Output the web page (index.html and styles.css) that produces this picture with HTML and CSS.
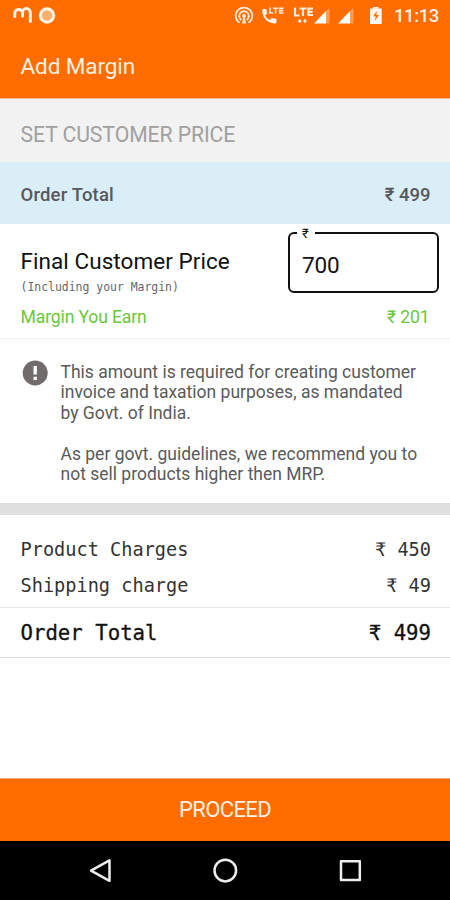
FILE: index.html
```html
<!DOCTYPE html>
<html lang="en">
<head>
<meta charset="utf-8">
<title>Add Margin</title>
<link rel="stylesheet" href="styles.css">
</head>
<body>
<div class="screen">
  <header class="header">
    <div class="status">
      <svg class="status-left" width="45" height="32" viewBox="0 0 45 32" fill="none" stroke="#fff5e8">
        <path d="M1.800 16.500v-3.500a3.900 3.900 0 0 1 7.700-.5v3.500M9.500 12.500a3.900 3.900 0 0 1 7.800 0v9" stroke-width="3" stroke-linecap="round"/>
        <circle cx="34" cy="15.500" r="6.700" fill="#ffb06f" stroke-width="3"/>
      </svg>
      <svg class="status-icons" width="125" height="32" viewBox="234 0 125 32" fill="none" stroke="#ffeadb">
        <path d="M239.500 22.800a8.300 8.300 0 1 1 9 0M241.300 20a4.800 4.800 0 1 1 5.400 0" stroke-width="1.800"/>
        <circle cx="244" cy="16" r="1.900" fill="#ffeadb" stroke="none"/>
        <path d="M243.200 17.500h1.600l1.200 6h-4z" fill="#ffeadb" stroke="none"/>
        <path d="M262.500 9h3.700l1.200 4.500-2.400 2q1.500 3 4.500 4.400l2.200-2.200 4.800 1.200v3.700q-1 1.200-3 .8-10-2-11.300-11.500z" fill="#fff5ec" stroke="none"/>
        <path d="M270 7.500v5.500h3.200M273 8.200h5.200M275.600 8.200v5.500M283.500 8.200h-3.800v4.800h3.800M279.700 10.600h3.500" stroke-width="1.600"/>
        <path d="M295 7.500v8h4.500M299.500 8.500h7M303 8.500v7.500M313 8.500h-4.600v6.500h4.600M308.400 11.800h4.200" stroke-width="2.200"/>
        <path d="M297.500 21l2.500-2.200 1.700 2.200-1.700 2.200zM307 21l-2.200-2.200-1.700 2.200 1.700 2.200z" fill="#ffeadb" stroke="none"/>
        <path d="M314 23.500 326 11v12.500zM338 23.500 350 11v12.500z" fill="#fff" stroke="none"/>
        <path d="M326 11l3.500-3v15.500h-3.500zM350 11l3.500-3v15.500h-3.500z" fill="#ff9b55" stroke="none"/>
      </svg>
      <svg class="battery" width="14" height="32" viewBox="369 0 14 32">
        <path d="M370 8.500h3V7h5.500v1.500h3.200v15.500H370z" fill="#fff5ec"/>
        <path d="M376.800 11l-3.600 5.300h2.500l-.7 4.400 3.900-5.700h-2.600z" fill="#ff6c00"/>
      </svg>
      <span class="clock">11:13</span>
    </div>
    <h1 class="title">Add Margin</h1>
  </header>
  <div class="section-label"><span>SET CUSTOMER PRICE</span></div>
  <div class="total-band"><span class="total-name">Order Total</span><span class="total-sum">₹ 499</span></div>
  <section class="price">
    <div class="price-row">
      <div class="price-names">
        <div class="price-title">Final Customer Price</div>
        <div class="price-note">(Including your Margin)</div>
      </div>
      <div class="price-field"><span class="unit">₹</span><span class="value">700</span></div>
    </div>
    <div class="earn"><span class="earn-name">Margin You Earn</span><span class="earn-sum">₹ 201</span></div>
  </section>
  <section class="info">
    <svg class="info-icon" width="26" height="26" viewBox="0 0 26 26">
      <circle cx="13.200" cy="13" r="12.500" fill="#726b6c"/>
      <path d="M11.500 6h3.400v8.500h-3.400zM11.500 16.700h3.400v3.300h-3.400z" fill="#fff"/>
    </svg>
    <div class="info-text">
      <p>This amount is required for creating customer<br>invoice and taxation purposes, as mandated<br>by Govt. of India.</p>
      <p>As per govt. guidelines, we recommend you to<br>not sell products higher then MRP.</p>
    </div>
  </section>
  <section class="charges">
    <div class="charge"><span>Product Charges</span><span>₹ 450</span></div>
    <div class="charge"><span>Shipping charge</span><span>₹ 49</span></div>
  </section>
  <div class="grand"><span>Order Total</span><span>₹ 499</span></div>
  <button class="proceed"><span>PROCEED</span></button>
  <nav class="nav">
    <svg width="26" height="26" viewBox="0 0 26 26"><path d="M22.500 2.300v20.500L4 12.600z"/></svg>
    <svg width="26" height="26" viewBox="0 0 26 26"><circle cx="13.300" cy="12.600" r="10.800"/></svg>
    <svg width="26" height="26" viewBox="0 0 26 26"><path d="M4 3.300h18.800v18.800H4z"/></svg>
  </nav>
</div>
</body>
</html>
```
FILE: styles.css
```css
* { box-sizing: border-box; }
body { margin: 0; }
.screen {
  width: 450px; height: 900px; display: flex; flex-direction: column;
  background: #fff; color: #111; font-family: Roboto, sans-serif;
}
.header { height: 99px; background: #ff6c00; border-bottom: 1px solid #ffb88a; color: #fff2e6; }
.status { height: 32px; display: flex; padding: 0 12px 0 13px; }
.status svg { flex: none; }
.status-icons { margin-left: 176px; }
.battery { margin-left: 10px; }
.clock { margin-left: 11px; font-size: 18.500px; font-weight: 500; letter-spacing: -.4px; line-height: 33px; white-space: nowrap; }
.title { margin: 0; padding-left: 20.500px; font-size: 22.500px; font-weight: 400; letter-spacing: -.1px; line-height: 68px; }
.section-label { height: 63px; padding-left: 20.500px; background: #f2f2f2; color: #a0a0a0; font-size: 21.200px; letter-spacing: -.08px; line-height: 72px; }
.total-band {
  height: 62px; padding: 0 19.500px 0 20.500px; display: flex; justify-content: space-between;
  background: #daeef7; color: #58585c; font-size: 18.500px; font-weight: 500; line-height: 67px;
}
.total-name { letter-spacing: .18px; }
.price { height: 115px; padding: 8px 11px 0 20.500px; border-bottom: 1px solid #eee; }
.price-row { display: flex; justify-content: space-between; height: 61px; }
.price-names { padding-top: 14px; }
.price-title { font-size: 22.500px; letter-spacing: .06px; line-height: 30px; }
.price-note { font: 11.450px/22px "DejaVu Sans Mono", monospace; color: #666; }
.price-field {
  position: relative; width: 151px; height: 61px; padding-left: 12px;
  border: 2px solid #111; border-radius: 6px; font-size: 22.500px; line-height: 62px;
}
.value { letter-spacing: -.2px; }
.unit {
  position: absolute; top: -7px; left: 7px; width: 18px; padding-left: 5px;
  background: #fff; font-size: 13px; line-height: 14px;
}
.earn { display: flex; justify-content: space-between; padding-right: 9.500px; color: #69c83c; font-size: 17.600px; letter-spacing: -.15px; line-height: 48px; }
.info { height: 164px; display: flex; padding: 21px 20px 0 22px; }
.info-icon { flex: none; }
.info-text { padding: 1.500px 0 0 12.500px; color: #5a5a5a; font-size: 17.500px; line-height: 20.600px; white-space: nowrap; }
.info-text p { margin: 0 0 20.600px; }
.charges { height: 105px; padding: 16px 19px 0 20.500px; border-top: 12px solid #dfdfdf; border-bottom: 1px solid #e8e8e8; }
.charge, .grand { display: flex; justify-content: space-between; white-space: nowrap; font-family: "DejaVu Sans Mono", monospace; }
.charge { height: 36px; color: #333; font-size: 18.600px; line-height: 37px; }
.grand { height: 50px; padding: 0 19px 0 20.500px; border-bottom: 1px solid #ddd; font-size: 20.700px; line-height: 50px; }
.grand { -webkit-text-stroke: .3px #111; }
.proceed {
  margin: auto 0 0; height: 63px; flex: none; padding: 0; border: 0; border-top: 1px solid #ffa873;
  background: #ff6c00; color: #fff2e6; font: 22px/62px Roboto, sans-serif; letter-spacing: -.6px;
}
.nav { height: 59px; flex: none; display: flex; justify-content: center; gap: 99px; padding-top: 17px; background: #000; }
.nav svg { fill: none; stroke: #eee; stroke-width: 2.500; stroke-linejoin: round; }
```
